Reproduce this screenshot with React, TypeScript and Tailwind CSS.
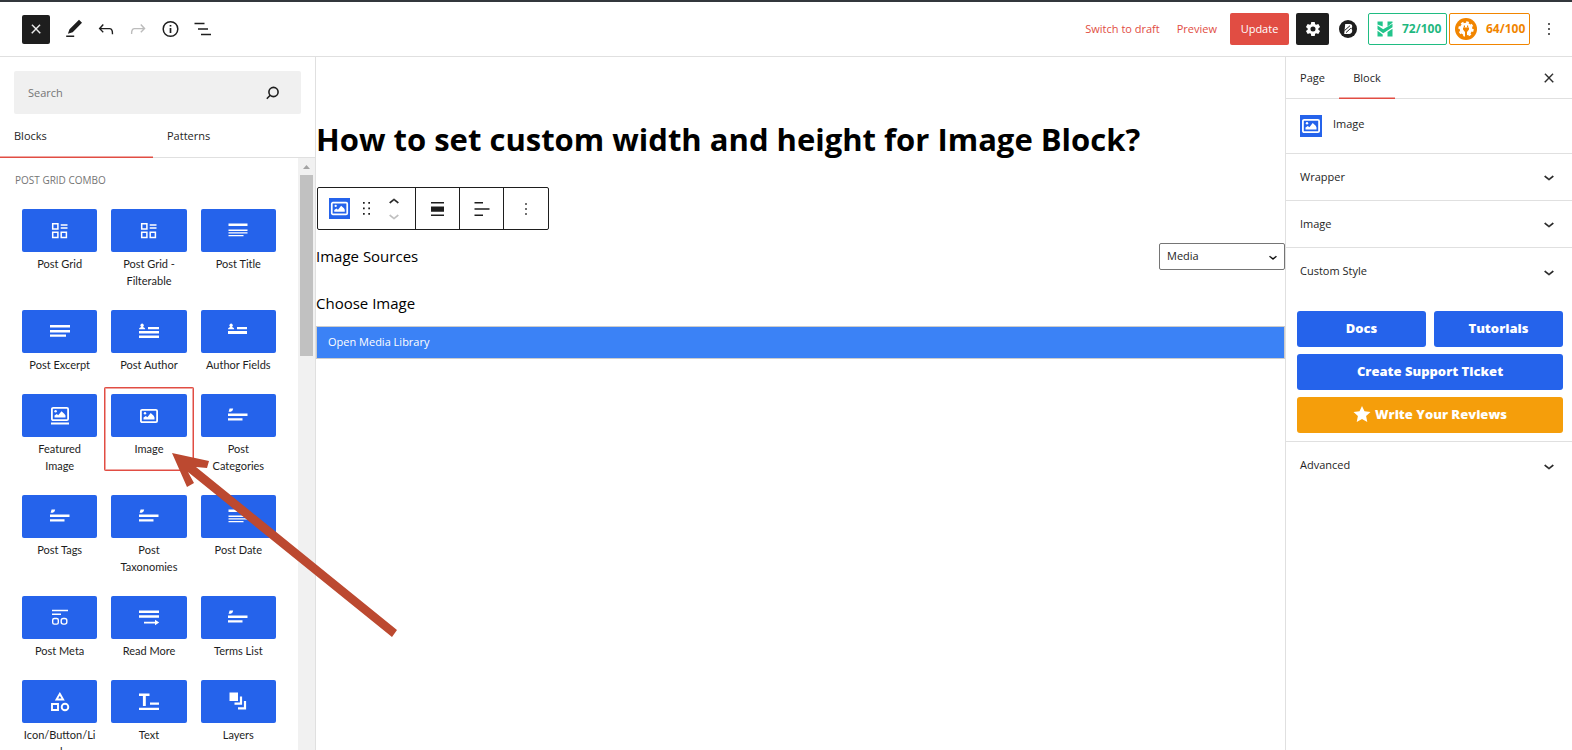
import React, { useState } from "react";

type IconProps = { className?: string };

const X = ({ className }: IconProps) => (
  <svg className={className} viewBox="0 0 24 24" fill="currentColor" stroke="currentColor" strokeWidth="1">
    <path d="M13 11.8l6.1-6.3-1-1-6.1 6.2-6.1-6.2-1 1 6.1 6.3-6.5 6.7 1 1 6.5-6.6 6.5 6.6 1-1z" />
  </svg>
);

const Chevron = ({ className }: IconProps) => (
  <svg className={className} viewBox="0 0 24 24" fill="currentColor">
    <path d="M17.5 11.6L12 16l-5.5-4.4.9-1.2L12 14l4.5-3.6 1 1.2z" stroke="currentColor" strokeWidth="0.5" />
  </svg>
);

const Dots = ({ className }: IconProps) => (
  <svg className={className} viewBox="0 0 24 24" fill="currentColor">
    <path d="M13 19h-2v-2h2v2zm0-6h-2v-2h2v2zm0-6h-2V5h2v2z" />
  </svg>
);

const picture = (
  <>
    <rect x="2.9" y="4.9" width="16.2" height="12.2" rx="1.2" fill="none" stroke="currentColor" strokeWidth="1.8" />
    <path d="M5.5 14.5v-2l2.3-1.6 1.6 1.3 3.3-4.2 3 2.8.8 1.6v2.1z" />
    <circle cx="7" cy="8.3" r="1.2" />
  </>
);

const ImageBadge = ({ className }: IconProps) => (
  <svg className={className} viewBox="0 0 22 22" fill="currentColor">
    <rect width="22" height="22" fill="#2563eb" />
    {picture}
  </svg>
);

const tags = (
  <path d="M2 9.6h19.500v2.500H2zM2 14.200h14.500v2.400H2zM3.600 4.600h3.600l-.8 2.200-1.600 1H2.600z" />
);
const gridShape = (
  <g fill="none" stroke="currentColor" strokeWidth="1.5">
    <path d="M4.700 4.700h5.200v5.200H4.700zM4.700 13.200h5.200v5.200H4.700zM13.200 13.200h5.200v5.200h-5.200zM12.700 6h6.800M12.700 9h6.800" />
  </g>
);
const titleShape = (
  <path d="M2.500 4.500h19v2.600h-19zM2.500 10.500h19v1.400h-19zM2.500 13.300h19v1.200h-19zM2.500 16h15v1.300h-15z" />
);

type Block = { name: string; art: React.ReactNode; selected?: boolean };

const blocks: Block[] = [
  { name: "Post Grid", art: gridShape },
  { name: "Post Grid - Filterable", art: gridShape },
  { name: "Post Title", art: titleShape },
  { name: "Post Excerpt", art: <path d="M2 5h20v2.500H2zM2 10h20v2.500H2zM2 14.500h16v2.200H2z" /> },
  {
    name: "Post Author",
    art: <path d="M11 7h11v2.300H11zM2 11h20v2.600H2zM2 15.500h20v2.400H2zM2 9.300c0-1.800 1.500-2.100 2.300-2.400a1.700 1.700 0 1 1 1.600 0c.8.3 2.300.6 2.300 2.400z" />,
  },
  {
    name: "Author Fields",
    art: <path d="M11 7h10v2.300H11zM2 11h19v3H2zM2 9.300c0-1.800 1.500-2.100 2.300-2.400a1.700 1.700 0 1 1 1.600 0c.8.3 2.300.6 2.300 2.400z" />,
  },
  {
    name: "Featured Image",
    art: (
      <>
        <rect x="3.900" y="3.900" width="16.200" height="12.200" rx="1.200" fill="none" stroke="currentColor" strokeWidth="1.800" />
        <path d="M6.500 13.500v-2l2.300-1.400 1.400 1.100 3.300-4 3 2.800 1 1.600v1.900zM3 18.600h18v2H3z" />
        <circle cx="7.600" cy="7.300" r="1.200" />
      </>
    ),
  },
  { name: "Image", art: <g transform="translate(1 1)">{picture}</g>, selected: true },
  { name: "Post Categories", art: tags },
  { name: "Post Tags", art: tags },
  { name: "Post Taxonomies", art: tags },
  { name: "Post Date", art: titleShape },
  {
    name: "Post Meta",
    art: (
      <g fill="none" stroke="currentColor" strokeWidth="1.400">
        <path d="M4 4.500h16M4 8.300h9" />
        <rect x="4.700" y="12.500" width="5.600" height="5.600" rx="1.600" />
        <rect x="13.200" y="12.500" width="5.600" height="5.600" rx="2" />
      </g>
    ),
  },
  {
    name: "Read More",
    art: <path d="M2 4.500h20V7H2zM2 9.300h20v2.500H2zM7 15.700h11v-2l4.200 2.800L18 19.300v-1.900H7z" />,
  },
  { name: "Terms List", art: tags },
  {
    name: "Icon/Button/Link",
    art: (
      <g fill="none" stroke="currentColor" strokeWidth="1.900">
        <path d="M11.800 3.800l3.300 5.700H8.500zM4 14h6v6H4z" />
        <circle cx="17" cy="17" r="3.300" />
      </g>
    ),
  },
  {
    name: "Text",
    art: <path d="M2 3.500h10.500v2.600H8.800V16H5.900V6.100H2zM13 12.600h9v2.200h-9zM2 17.800h20V20H2z" />,
  },
  {
    name: "Layers",
    art: (
      <>
        <path d="M3.500 2.500H12V11H3.500z" />
        <path d="M15 6.500v7.200H8.500M19 11v7.300h-7" fill="none" stroke="currentColor" strokeWidth="2.200" />
      </>
    ),
  },
];

const BlockTile = ({ name, art, selected }: Block) => (
  <button
    type="button"
    className={
      selected
        ? "rounded-[2px] px-[7px] pt-[7px] pb-[14px] text-center shadow-[inset_0_0_0_1px_#e14d43,inset_0_0_0_2px_#e14d4380]"
        : "rounded-[2px] px-[7px] pt-[7px] pb-[14px] text-center"
    }
  >
    <span className="flex h-[43px] items-center justify-center rounded-[2px] bg-[#2563eb] text-white">
      <svg className="h-6 w-6" viewBox="0 0 24 24" fill="currentColor">
        {art}
      </svg>
    </span>
    <span
      className={
        name.includes("/")
          ? "mt-[3px] block px-px text-[11px] leading-[17px] break-all text-[#1e1e1e]"
          : "mt-[3px] block px-[3px] text-[11px] leading-[17px] wrap-break-word text-[#1e1e1e]"
      }
    >
      {name}
    </span>
  </button>
);

const Header = () => (
  <header className="flex h-[57px] shrink-0 items-center justify-between border-t-2 border-b border-t-[#32373c] border-b-[#e0e0e0] pr-[13px] pl-[22px]">
    <div className="flex items-center gap-3 text-[#1e1e1e]">
      <button type="button" aria-label="Close inserter" className="mr-0.5 flex h-[29px] w-7 items-center justify-center rounded-[2px] bg-[#1e1e1e] text-white">
        <X className="h-[14px] w-[14px]" />
      </button>
      <button type="button" aria-label="Tools" className="flex w-5 justify-center">
        <svg className="h-5 w-5" viewBox="0 0 20 20" fill="currentColor">
          <path d="M15 .8l3 3-9.300 9.400-4.800 1.600 1.600-4.600zM2.200 16.400h8v1.500h-8z" />
        </svg>
      </button>
      <button type="button" aria-label="Undo" className="flex w-5 justify-center">
        <svg className="h-[22px] w-[22px] shrink-0" viewBox="0 0 24 24" fill="currentColor">
          <path d="M18.300 11.700c-.6-.6-1.400-.9-2.300-.9H6.700l2.900-3.300-1.100-1-4.500 5L8.500 16l1-1-2.700-2.700H16c.5 0 .9.200 1.300.5 1 1 1 3.400 1 4.500v.3h1.500v-.2c0-1.500 0-4.300-1.500-5.700z" />
        </svg>
      </button>
      <button type="button" aria-label="Redo" disabled className="flex w-5 justify-center text-[#bcbcbc]">
        <svg className="h-[22px] w-[22px] shrink-0" viewBox="0 0 24 24" fill="currentColor">
          <path d="M15.600 6.500l-1.100 1 2.900 3.300H8c-.9 0-1.700.3-2.300.9-1.400 1.500-1.400 4.200-1.400 5.600v.2h1.500v-.3c0-1.100 0-3.500 1-4.500.3-.3.7-.5 1.300-.5h9.200L14.500 15l1.100 1.100 4.600-4.600-4.600-5z" />
        </svg>
      </button>
      <button type="button" aria-label="Details" className="flex w-5 justify-center">
        <svg className="h-5 w-5" viewBox="0 0 20 20" fill="none" stroke="currentColor" strokeWidth="1.500">
          <circle cx="10.500" cy="10" r="7.300" />
          <path d="M10.500 9v5M10.500 6v1.600" strokeWidth="1.700" />
        </svg>
      </button>
      <button type="button" aria-label="List view" className="flex w-5 justify-center">
        <svg className="h-5 w-5" viewBox="0 0 20 20" fill="currentColor">
          <path d="M2.500 3.700h10v1.500h-10zM6 9.200h10v1.500H6zM9 14.700h10v1.500H9z" />
        </svg>
      </button>
    </div>
    <div className="flex items-center text-[11px]">
      <a href="#draft" className="mr-[17px] text-[#e14d43]">Switch to draft</a>
      <a href="#preview" className="mr-[13px] text-[#e14d43]">Preview</a>
      <button type="button" className="h-8 w-[59px] rounded-[2px] bg-[#e14d43] font-medium text-white">Update</button>
      <button type="button" aria-label="Settings" className="ml-[7px] flex h-8 w-[33px] items-center justify-center rounded-[2px] bg-[#1e1e1e] text-white">
        <svg className="h-4 w-4" viewBox="0 0 24 24" fill="currentColor" fillRule="evenodd">
          <path d="M9.400 1.500h5.200l.6 3.400 1.600.9 3.200-1.200 2.600 4.500-2.600 2.100v1.800l2.600 2.100-2.600 4.500-3.200-1.200-1.600.9-.6 3.300H9.400l-.6-3.300-1.600-.9L4 19.600l-2.600-4.500L4 13v-1.800L1.400 9.100 4 4.600l3.200 1.200 1.600-.9zM12 8.300a3.800 3.800 0 1 0 0 7.600 3.800 3.800 0 1 0 0-7.600z" />
        </svg>
      </button>
      <button type="button" aria-label="Post Grid Combo" className="ml-[10px]">
        <svg className="h-[18px] w-[18px]" viewBox="0 0 18 18" fill="none">
          <circle cx="9" cy="9" r="9" fill="#1e1e1e" />
          <path d="M6.200 4h4.600c2.600 0 3.200 3 1.400 4.500 2 1.600 1 5.500-2 5.500H5.200z" fill="#fff" />
          <path d="M5.500 10.600L11 5.700M7 12.600l4.800-4.400" stroke="#1e1e1e" strokeWidth="1" />
        </svg>
      </button>
      <button type="button" className="ml-[11px] flex h-8 w-[79px] items-center gap-[9px] rounded-[2px] border border-[#1fbc82] pl-2 text-xs font-bold text-[#1fb87f]">
        <svg className="h-4 w-4 shrink-0" viewBox="0 0 16 16" fill="#22c48b">
          <path d="M.5.500h5.200v5L.5 3.400z" />
          <path d="M10.500.500h5v1.300l-5 3.600z" />
          <path d="M.5 4.600l5.700 3.600 9.300-5.400v3.400l-9.300 6L.5 8.300z" />
          <path d="M.5 9.800l5.200 3.600v2.100H.5zM10.500 11l5-3.300v7.800h-5z" />
        </svg>
        72/100
      </button>
      <button type="button" className="ml-[2px] flex h-8 w-[81px] items-center gap-[9px] rounded-[2px] border border-[#f18500] pl-[5px] text-xs font-bold text-[#f18500]">
        <svg className="h-[22px] w-[22px] shrink-0" viewBox="0 0 22 22">
          <circle cx="11" cy="11" r="11" fill="#f18500" />
          <circle cx="11" cy="11" r="6.300" fill="#fff" />
          <circle cx="11" cy="11" r="6.700" fill="none" stroke="#fff" strokeWidth="2" strokeDasharray="2.630 2.630" />
          <path d="M9.400 7.500v2M12.600 7.500v2" stroke="#f18500" strokeWidth="1.200" />
          <path d="M8 9.500h6v2l-2 2.400V19h-2v-5.100l-2-2.400z" fill="#f18500" />
        </svg>
        64/100
      </button>
      <button type="button" aria-label="Options" className="ml-[9px]">
        <Dots className="h-5 w-5" />
      </button>
    </div>
  </header>
);

const Inserter = () => (
  <aside className="flex w-[316px] shrink-0 flex-col border-r border-[#e0e0e0]">
    <div className="mx-[14px] mt-[14px] flex h-[43px] shrink-0 items-center rounded-[2px] bg-[#f0f0f0] pr-5 pl-[14px]">
      <input
        type="search"
        aria-label="Search"
        placeholder="Search"
        className="min-w-0 flex-1 bg-transparent pt-0.5 text-[11px] outline-none placeholder:text-[#757575]"
      />
      <svg className="h-4 w-4" viewBox="0 0 16 16" fill="none" stroke="#1e1e1e" strokeWidth="1.600">
        <circle cx="8.500" cy="7" r="4.600" />
        <path d="M5.200 10.300L1.800 13.700" />
      </svg>
    </div>
    <div role="tablist" className="flex h-11 shrink-0 border-b border-[#e0e0e0] text-[11px] font-medium text-[#1e1e1e]">
      <button
        type="button"
        role="tab"
        aria-selected="true"
        className="-mb-px w-[153px] pl-[14px] text-left shadow-[inset_0_-1px_0_#e14d43,inset_0_-2px_0_#e14d4380]"
      >
        Blocks
      </button>
      <button type="button" role="tab" aria-selected="false" className="-mb-px pl-[14px]">
        Patterns
      </button>
    </div>
    <div className="flex min-h-0 flex-1">
      <div className="min-w-0 flex-1 overflow-hidden px-[15px]">
        <h2 className="py-[14px] text-[10px] leading-4 font-medium text-[#757575] uppercase">Post Grid Combo</h2>
        <div className="grid grid-cols-3 items-start font-['Lato','Open_Sans',sans-serif]">
          {blocks.map((b) => (
            <BlockTile key={b.name} {...b} />
          ))}
        </div>
      </div>
      <div className="flex w-[17px] flex-col items-center bg-[#f1f1f1]">
        <svg className="h-[17px] w-[17px]" viewBox="0 0 17 17" fill="#a3a3a3">
          <path d="M5 11l3.500-4 3.500 4z" />
        </svg>
        <div className="h-[181px] w-[13px] bg-[#c1c1c1]" />
      </div>
    </div>
  </aside>
);

const BlockToolbar = () => (
  <div className="ml-px flex h-[43px] w-fit divide-x divide-[#1e1e1e] rounded-[2px] border border-[#1e1e1e] text-[#1e1e1e]">
    <div className="flex w-[98px] items-center pl-[11px]">
      <button type="button" aria-label="Image" className="text-white">
        <ImageBadge className="h-[21px] w-[21px]" />
      </button>
      <button type="button" aria-label="Drag" className="ml-[7px]">
        <svg className="h-5 w-5" viewBox="0 0 20 20" fill="currentColor">
          <path d="M6 3h1.700v1.700H6zM11.300 3H13v1.700h-1.700zM6 8.500h1.700v1.700H6zM11.300 8.500H13v1.700h-1.700zM6 14h1.700v1.700H6zM11.300 14H13v1.700h-1.700z" />
        </svg>
      </button>
      <div className="ml-[7px] flex flex-col">
        <button type="button" aria-label="Move up" className="flex h-[14px] items-center">
          <Chevron className="h-5 w-5 rotate-180" />
        </button>
        <button type="button" aria-label="Move down" disabled className="flex h-[14px] items-center text-[#bcbcbc]">
          <Chevron className="h-5 w-5" />
        </button>
      </div>
    </div>
    <button type="button" aria-label="Align" className="flex w-11 items-center justify-center">
      <svg className="h-5 w-5" viewBox="0 0 20 20" fill="currentColor">
        <path d="M3 3h13v1.400H3zM3 7.500h13v5.300H3zM3 15.600h13V17H3z" />
      </svg>
    </button>
    <button type="button" aria-label="Align text" className="flex w-11 items-center justify-center">
      <svg className="h-5 w-5" viewBox="0 0 20 20" fill="currentColor">
        <path d="M2.500 3h8.500v1.400H2.500zM2.500 9.300h15v1.400h-15zM2.500 15.600h8.500V17H2.500z" />
      </svg>
    </button>
    <button type="button" aria-label="More" className="flex w-11 items-center justify-center">
      <Dots className="h-5 w-5" />
    </button>
  </div>
);

const Editor = () => (
  <main className="min-w-0 flex-1 text-black">
    <h1 className="mt-[60px] text-[31px] leading-[44px] font-bold">How to set custom width and height for Image Block?</h1>
    <div className="mt-[26px]">
      <BlockToolbar />
    </div>
    <div className="mt-[13px] flex h-[27px] items-center justify-between">
      <label htmlFor="source" className="text-[15px]">Image Sources</label>
      <div className="relative">
        <select id="source" className="block h-[27px] w-[126px] appearance-none rounded-[2px] border border-[#757575] bg-white pl-[7px] text-[11px] text-[#1e1e1e]">
          <option>Media</option>
        </select>
        <Chevron className="pointer-events-none absolute top-1.5 right-1 h-4 w-4" />
      </div>
    </div>
    <p className="mt-[21px] text-[15px] leading-6">Choose Image</p>
    <button type="button" className="mt-[11px] block h-[33px] w-full border border-[#cccccc] bg-[#3b82f6] px-[11px] text-left text-[11px] font-medium text-white">
      Open Media Library
    </button>
  </main>
);

const Panel = ({ title }: { title: string }) => {
  const [open, setOpen] = useState(false);
  return (
    <button
      type="button"
      aria-expanded={open}
      onClick={() => setOpen(!open)}
      className="flex h-[47px] w-full items-center justify-between pr-[13px] pl-[14px] text-[11px] font-medium text-[#1e1e1e]"
    >
      {title}
      <Chevron className="h-5 w-5" />
    </button>
  );
};

const Inspector = () => (
  <aside className="w-[287px] shrink-0 border-l border-[#e0e0e0] text-[11px] font-medium text-[#1e1e1e]">
    <div role="tablist" className="flex h-[42px] border-b border-[#e0e0e0] pr-4">
      <button type="button" role="tab" aria-selected="false" className="-mb-px w-[53px]">Page</button>
      <button
        type="button"
        role="tab"
        aria-selected="true"
        className="-mb-px w-14 shadow-[inset_0_-1px_0_#e14d43,inset_0_-2px_0_#e14d4380]"
      >
        Block
      </button>
      <button type="button" aria-label="Close settings" className="ml-auto">
        <X className="h-[14px] w-[14px]" />
      </button>
    </div>
    <div className="flex h-[55px] items-start gap-[11px] border-b border-[#e0e0e0] pt-4 pl-[14px]">
      <ImageBadge className="h-[22px] w-[22px] text-white" />
      <h2 className="leading-[18px]">Image</h2>
    </div>
    <div className="divide-y divide-[#e0e0e0]">
      <Panel title="Wrapper" />
      <Panel title="Image" />
      <Panel title="Custom Style" />
    </div>
    <div className="mt-4 grid grid-cols-2 gap-x-2 gap-y-[7px] border-b border-[#e0e0e0] pr-[9px] pb-2 pl-[11px] text-center text-[13px] font-extrabold text-white">
      <a href="#docs" className="flex h-9 items-center justify-center rounded-[3px] bg-[#2563eb]">Docs</a>
      <a href="#tutorials" className="flex h-9 items-center justify-center rounded-[3px] bg-[#2563eb]">Tutorials</a>
      <a href="#support" className="col-span-2 flex h-9 items-center justify-center rounded-[3px] bg-[#2563eb]">Create Support Ticket</a>
      <a href="#reviews" className="col-span-2 flex h-9 items-center justify-center gap-1 rounded-[3px] bg-[#f59e0b]">
        <svg className="h-[18px] w-[18px]" viewBox="0 0 18 18" fill="currentColor">
          <path d="M9 0l2.500 5.200 6 .7-4.400 4 1.200 6L9 13.100l-5.300 2.800 1.200-6-4.400-4 6-.7z" />
        </svg>
        Write Your Reviews
      </a>
    </div>
    <Panel title="Advanced" />
  </aside>
);

export default function App() {
  return (
    <div className="relative flex h-screen flex-col overflow-hidden bg-white font-['Open_Sans','Noto_Sans',sans-serif]">
      <Header />
      <div className="flex min-h-0 flex-1">
        <Inserter />
        <Editor />
        <Inspector />
      </div>
      <svg className="pointer-events-none absolute top-[440px] left-[160px] h-[200px] w-[250px]" viewBox="160 440 250 200">
        <path d="M172 453l37 8-2 7-11-1 201 163-5 7-204-165 6 11-7 4z" fill="#bc4930" />
      </svg>
    </div>
  );
}
